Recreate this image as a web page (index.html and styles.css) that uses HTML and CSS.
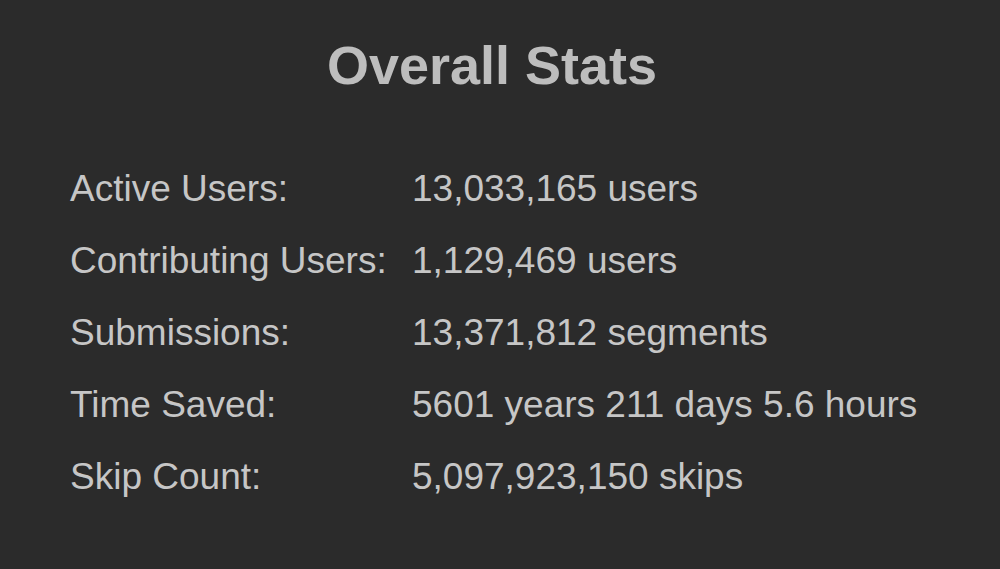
FILE: index.html
```html
<!DOCTYPE html>
<html lang="en">
<head>
  <meta charset="UTF-8" />
  <title>Overall Stats</title>
  <link rel="stylesheet" href="styles.css">
</head>
<body>
  <div class="container">
    <h1>Overall Stats</h1>

    <div class="stats">
      <div class="label">Active Users:</div>
      <div class="value">13,033,165 users</div>

      <div class="label">Contributing Users:</div>
      <div class="value">1,129,469 users</div>

      <div class="label">Submissions:</div>
      <div class="value">13,371,812 segments</div>

      <div class="label">Time Saved:</div>
      <div class="value">5601 years 211 days 5.6 hours</div>

      <div class="label">Skip Count:</div>
      <div class="value">5,097,923,150 skips</div>
    </div>
  </div>
</body>
</html>
```

FILE: styles.css
```css
body {
  margin: 0;
  background: #2b2b2b;
  color: #c6c6c6;
  font-family: 'Liberation Sans', Arial, sans-serif;
}

.container {
  padding: 30px 0 40px 70px;
}

h1 {
  margin: 0;
  padding-right: 86px;
  text-align: center;
  font-size: 54px;
  font-weight: bold;
  color: #bdbdbd;
  line-height: 70px;
}

.stats {
  display: grid;
  grid-template-columns: 342px auto;
  margin-top: 64px;
  row-gap: 22px;
  font-size: 37px;
  line-height: 50px;
}
```
